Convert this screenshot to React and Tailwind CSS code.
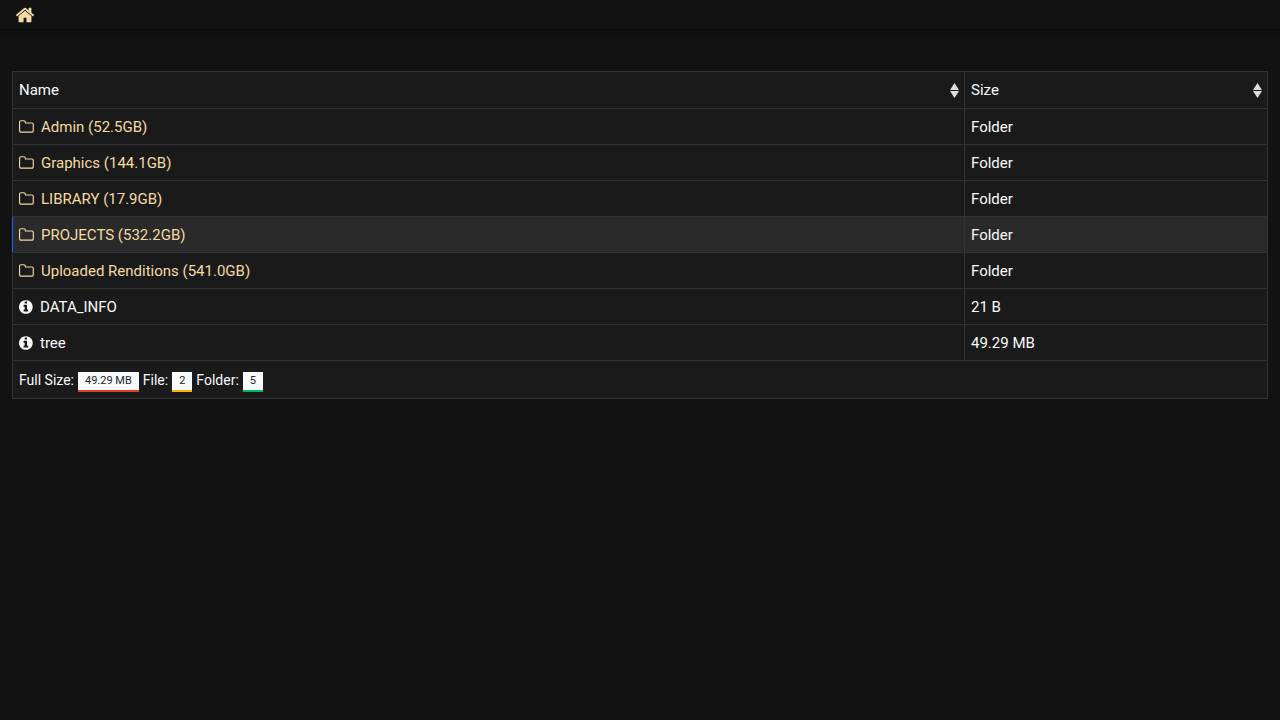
import { useState } from 'react';
import clsx from 'clsx';

const folders = [
  { name: 'Admin', size: '52.5GB' },
  { name: 'Graphics', size: '144.1GB' },
  { name: 'LIBRARY', size: '17.9GB' },
  { name: 'PROJECTS', size: '532.2GB' },
  { name: 'Uploaded Renditions', size: '541.0GB' },
];

const files = [
  { name: 'DATA_INFO', size: '21 B' },
  { name: 'tree', size: '49.29 MB' },
];

const ICONS = {
  home: 'M1472 992v480q0 26-19 45t-45 19h-384v-384h-256v384h-384q-26 0-45-19t-19-45v-480q0-1 .5-3t.5-3l575-474 575 474q1 2 1 6zm223-69l-62 74q-8 9-21 11h-3q-13 0-21-7l-692-577-692 577q-12 8-24 7-13-2-21-11l-62-74q-8-10-7-23.5t11-21.5l719-599q32-26 76-26t76 26l244 204v-195q0-14 9-23t23-9h192q14 0 23 9t9 23v408l219 182q10 8 11 21.5t-7 23.5z',
  folder: 'M1600 1312v-704q0-40-28-68t-68-28h-704q-40 0-68-28t-28-68v-64q0-40-28-68t-68-28h-320q-40 0-68 28t-28 68v960q0 40 28 68t68 28h1216q40 0 68-28t28-68zm128-704v704q0 92-66 158t-158 66h-1216q-92 0-158-66t-66-158v-960q0-92 66-158t158-66h320q92 0 158 66t66 158v32h672q92 0 158 66t66 158z',
  info: 'M1152 1376v-160q0-14-9-23t-23-9h-96v-512q0-14-9-23t-23-9h-320q-14 0-23 9t-9 23v160q0 14 9 23t23 9h96v320h-96q-14 0-23 9t-9 23v160q0 14 9 23t23 9h448q14 0 23-9t9-23zm-128-896v-160q0-14-9-23t-23-9h-192q-14 0-23 9t-9 23v160q0 14 9 23t23 9h192q14 0 23-9t9-23zm640 416q0 209-103 385.5t-279.5 279.5-385.5 103-385.5-103-279.5-279.5-103-385.5 103-385.5 279.5-279.5 385.5-103 385.5 103 279.5 279.5 103 385.5z',
};

function Icon({ name, viewBox = '0 0 1792 1792', className }) {
  return (
    <svg viewBox={viewBox} fill="currentColor" aria-hidden="true" className={className}>
      <path d={ICONS[name]} />
    </svg>
  );
}

function SortHeader({ label, className }) {
  return (
    <th scope="col" className={clsx('border border-[#333] p-0 text-left font-normal', className)}>
      <button type="button" className="flex h-9 w-full cursor-pointer items-center justify-between pr-[5px] pl-1.5">
        {label}
        <svg viewBox="0 0 9 15" fill="#dcdcdc" aria-hidden="true" className="h-[15px] w-[9px]">
          <path d="M4.5 0 9 7H0zM4.5 15 0 8h9z" />
        </svg>
      </button>
    </th>
  );
}

function Badge({ children, className }) {
  return (
    <span className={clsx('mt-1 inline-flex h-5 items-center border-b-2 bg-[#f8f9fa] px-[7px] text-[11px] text-[#212529]', className)}>
      {children}
    </span>
  );
}

export default function App() {
  const [active, setActive] = useState('PROJECTS');

  return (
    <div className="min-h-screen bg-[#121212] font-['Roboto','Liberation_Sans',sans-serif] text-[15px] leading-5 text-[#f8f9fa]">
      <nav className="flex h-[29px] items-center bg-[#121212] px-[15px] shadow-[0_2px_4px_rgba(0,0,0,0.4)]">
        <a href="#home" aria-label="Home" className="text-[#f3daa3]">
          <Icon name="home" className="h-5 w-5" />
        </a>
      </nav>
      <main className="px-3 pt-[42px]">
        <table className="w-full table-fixed border-collapse bg-[#1a1a1a]">
          <thead>
            <tr>
              <SortHeader label="Name" />
              <SortHeader label="Size" className="w-[303px]" />
            </tr>
          </thead>
          <tbody>
            {folders.map(({ name, size }) => (
              <tr key={name} onMouseEnter={() => setActive(name)} className={clsx('h-9', active === name && 'bg-[#2a2a2a]')}>
                <td className={clsx('border border-[#333] px-1.5 py-0', active === name && 'border-l-[#0d6efd]')}>
                  <a href={`#${name}`} className="flex items-center gap-1.5 text-[#f3daa3]">
                    <Icon name="folder" viewBox="64 0 1792 1792" className="h-4 w-4" />
                    {name} ({size})
                  </a>
                </td>
                <td className="border border-[#333] px-1.5 py-0">Folder</td>
              </tr>
            ))}
            {files.map(({ name, size }) => (
              <tr key={name} className="h-9">
                <td className="border border-[#333] px-1.5 py-0">
                  <span className="flex items-center gap-[5px]">
                    <Icon name="info" viewBox="128 0 1792 1792" className="h-4 w-4" />
                    {name}
                  </span>
                </td>
                <td className="border border-[#333] px-1.5 py-0">{size}</td>
              </tr>
            ))}
          </tbody>
          <tfoot>
            <tr>
              <td colSpan={2} className="border border-[#333] px-1.5 py-0">
                <div className="flex h-[37px] items-center gap-1 text-sm">
                  <span>Full Size:</span>
                  <Badge className="border-[#dc4128]">49.29 MB</Badge>
                  <span>File:</span>
                  <Badge className="border-[#ffb300]">2</Badge>
                  <span>Folder:</span>
                  <Badge className="border-[#00b862]">5</Badge>
                </div>
              </td>
            </tr>
          </tfoot>
        </table>
      </main>
    </div>
  );
}
